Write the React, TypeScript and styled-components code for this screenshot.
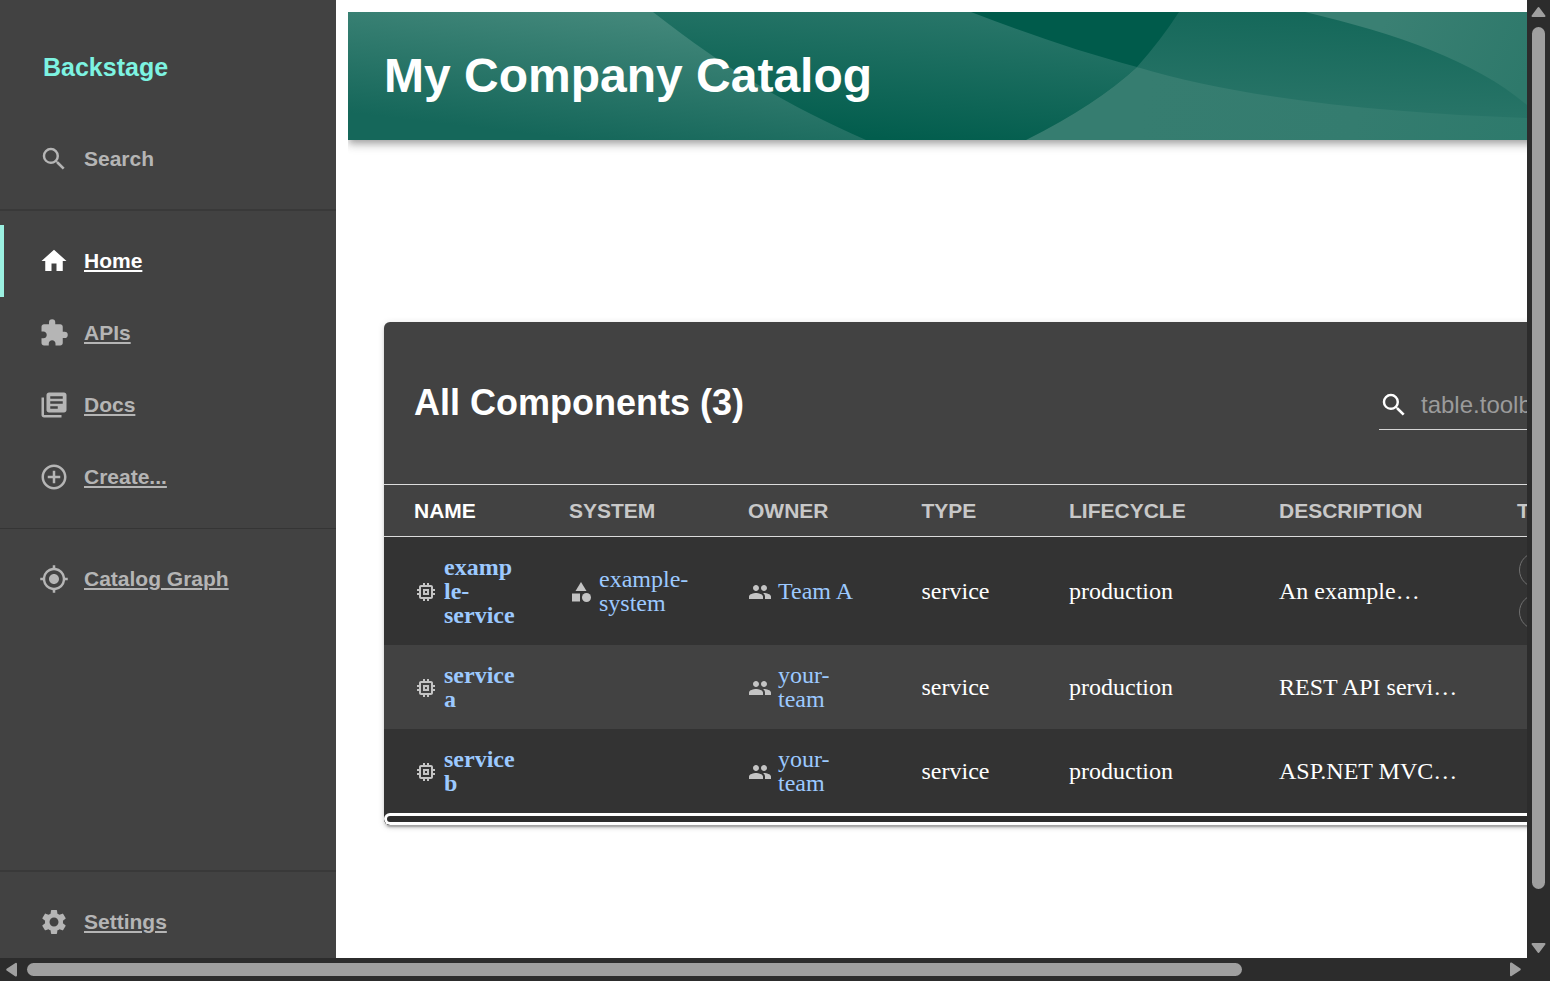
import React from "react";
import styled, { createGlobalStyle, css } from "styled-components";
import type { IconType } from "react-icons";
import {
  MdAddCircleOutline,
  MdCategory,
  MdExtension,
  MdHome,
  MdLibraryBooks,
  MdMemory,
  MdMyLocation,
  MdPeople,
  MdSearch,
  MdSettings,
} from "react-icons/md";

const sans = `"Liberation Sans", Arial, Helvetica, sans-serif`;
const serif = `"Liberation Serif", "Times New Roman", Times, serif`;

const GlobalStyle = createGlobalStyle`
  *, *::before, *::after { box-sizing: border-box; }
  body { margin: 0; background: #fff; font-family: ${sans}; overflow: hidden; }
`;

const Window = styled.div`
  display: grid;
  grid-template: 958px 23px / 1527px 23px;
  width: 1550px;
  height: 981px;
  background: #2c2c2c;
  overflow: hidden;
`;

const Viewport = styled.div`
  display: flex;
  min-width: 0;
  background: #fff;
  overflow: hidden;
`;

/* ---------- Sidebar ---------- */

const Sidebar = styled.nav`
  flex: none;
  display: flex;
  flex-direction: column;
  width: 336px;
  height: 958px;
  background: #424242;
`;

const Logo = styled.div`
  height: 123px;
  padding: 52px 0 0 43px;
  color: #7df3e1;
  font-size: 25px;
  font-weight: 700;
  line-height: 30px;
`;

const NavItem = styled.a<{ $active?: boolean; $plain?: boolean }>`
  display: flex;
  align-items: center;
  gap: 15px;
  height: 72px;
  padding-left: ${(p) => (p.$active ? 35 : 39)}px;
  border-left: ${(p) => (p.$active ? "4px solid #9bf0e1" : "none")};
  color: ${(p) => (p.$active ? "#fff" : "#b5b5b5")};
  font-size: 21px;
  font-weight: 700;
  line-height: 24px;
  text-decoration: ${(p) => (p.$plain ? "none" : "underline")};

  svg {
    flex: none;
    width: 30px;
    height: 30px;
  }
`;

const Divider = styled.hr<{ $thin?: boolean }>`
  width: 100%;
  height: ${(p) => (p.$thin ? 1 : 2)}px;
  margin: ${(p) => (p.$thin ? "15px 0 14px" : "14px 0")};
  border: 0;
  background: ${(p) => (p.$thin ? "#353535" : "#393939")};
`;

const Spacer = styled.div`
  flex: 1;
`;

/* ---------- Page ---------- */

const Page = styled.main`
  flex: 1;
  min-width: 0;
  padding: 12px 0 0 12px;
`;

const Header = styled.header`
  display: grid;
  align-items: center;
  width: 1240px;
  height: 128px;
  background: #005b4b;
  box-shadow:
    0 3px 6px -1.5px rgba(0, 0, 0, 0.2),
    0 6px 7.5px 0 rgba(0, 0, 0, 0.14),
    0 1.5px 15px 0 rgba(0, 0, 0, 0.12);
  clip-path: inset(0 0 -30px 0);

  > * {
    grid-area: 1 / 1;
  }
`;

const Waves = styled.svg`
  display: block;
  width: 1179px;
  height: 128px;
`;

const PageTitle = styled.h1`
  margin: 0;
  padding: 0 0 0 36px;
  color: #fff;
  font-size: 48px;
  font-weight: 700;
  line-height: 56px;
  z-index: 1;
`;

const Content = styled.section`
  padding: 182px 0 0 36px;
`;

const Card = styled.div`
  width: 1400px;
  border-radius: 6px;
  background: #424242;
  box-shadow:
    0 4.5px 1.5px -3px rgba(0, 0, 0, 0.2),
    0 3px 3px 0 rgba(0, 0, 0, 0.14),
    0 1.5px 7.5px 0 rgba(0, 0, 0, 0.12);
  overflow: hidden;
`;

const Toolbar = styled.div`
  display: flex;
  align-items: flex-start;
  height: 162px;
  padding-left: 30px;
`;

const TableTitle = styled.h2`
  width: 965px;
  margin: 0;
  padding-top: 60px;
  color: #fff;
  font-size: 36px;
  font-weight: 700;
  line-height: 42px;
`;

const SearchField = styled.div`
  display: flex;
  align-items: center;
  gap: 12px;
  flex: 1;
  height: 50px;
  margin-top: 58px;
  border-bottom: 1px solid #d4d4d4;
  color: #9b9b9b;
  font-size: 24px;
  line-height: 28px;
  white-space: nowrap;

  svg {
    flex: none;
    width: 30px;
    height: 30px;
    margin: 1px 0 0;
    color: #fff;
  }
`;

const columns = css`
  display: grid;
  grid-template-columns: 155px 179px 173.5px 147.5px 210px 238px 1fr;
`;

const HeadRow = styled.div`
  ${columns}
  align-items: center;
  height: 53px;
  border-top: 1px solid #dcdcdc;
  border-bottom: 1px solid #dcdcdc;
`;

const HeadCell = styled.div<{ $sorted?: boolean }>`
  padding-left: 30px;
  color: ${(p) => (p.$sorted ? "#fff" : "#c8c8c8")};
  font-size: 21px;
  font-weight: 700;
  line-height: 24px;
`;

const Row = styled.div<{ $dark?: boolean }>`
  ${columns}
  align-items: center;
  min-height: 84px;
  padding: 15px 0;
  background: ${(p) => (p.$dark ? "#333" : "#424242")};
`;

const Cell = styled.div`
  padding: 3px 0 3px 30px;
  color: #fff;
  font-family: ${serif};
  font-size: 24px;
  line-height: 24px;
  white-space: nowrap;
`;

const EntityLink = styled.a<{ $bold?: boolean; $width: number }>`
  display: flex;
  align-items: center;
  gap: 6px;
  color: #9cc9ff;
  font-weight: ${(p) => (p.$bold ? 700 : 400)};
  white-space: normal;

  svg {
    flex: none;
    width: 24px;
    height: 24px;
    margin: 2px 0 0;
    color: #c4c4c4;
  }

  span {
    width: ${(p) => p.$width}px;
    overflow-wrap: anywhere;
  }
`;

const Chips = styled.div`
  display: flex;
  flex-direction: column;
  gap: 6px;
  padding-left: 32px;
`;

const Chip = styled.span`
  width: 90px;
  height: 36px;
  border: 1px solid #707070;
  border-radius: 18px;
`;

const TableFooter = styled.div`
  background: #333;
`;

const TableScroll = styled.div`
  height: 12px;
  padding: 3px;
  border-radius: 6px;
  background: #fff;
`;

const TableScrollThumb = styled.div`
  height: 6px;
  border-radius: 3px;
  background: #2c2c2c;
`;

/* ---------- Window scrollbars ---------- */

const VerticalBar = styled.div`
  display: flex;
  flex-direction: column;
  align-items: center;
  justify-content: space-between;
  padding: 6px 0 4px;
`;

const HorizontalBar = styled.div`
  display: flex;
  align-items: center;
  justify-content: space-between;
  padding: 0 5px 0 5px;
`;

const VerticalThumb = styled.div`
  width: 13px;
  height: 862px;
  margin: 9px 0 auto;
  border-radius: 6.5px;
  background: #9f9f9f;
`;

const HorizontalThumb = styled.div`
  width: 1215px;
  height: 13px;
  margin: 0 auto 0 9px;
  border-radius: 6.5px;
  background: #9f9f9f;
`;

const ArrowSvg = styled.svg<{ $flip?: boolean }>`
  flex: none;
  display: block;
  transform: ${(p) => (p.$flip ? "rotate(180deg)" : "none")};
  fill: #a0a0a0;
  stroke: #a0a0a0;
  stroke-width: 2;
  stroke-linejoin: round;
`;

const UpDownArrow = ({ flip }: { flip?: boolean }) => (
  <ArrowSvg $flip={flip} width="17" height="12" viewBox="0 0 17 12">
    <path d="M8.5 2 L14.5 10 H2.5 Z" />
  </ArrowSvg>
);

const SideArrow = ({ flip }: { flip?: boolean }) => (
  <ArrowSvg $flip={flip} width="13" height="17" viewBox="0 0 13 17">
    <path d="M2.2 8.7 L11 2.8 V14.6 Z" />
  </ArrowSvg>
);

const HeaderWaves = () => (
  <Waves viewBox="0 0 1179 128" preserveAspectRatio="none" aria-hidden>
    <defs>
      <linearGradient id="left" gradientUnits="userSpaceOnUse" x1="250" y1="0" x2="235" y2="128">
        <stop offset="0" stopColor="#42877a" />
        <stop offset="1" stopColor="#15675a" />
      </linearGradient>
      <linearGradient id="middle" gradientUnits="userSpaceOnUse" x1="560" y1="0" x2="548" y2="128">
        <stop offset="0" stopColor="#277568" />
        <stop offset="1" stopColor="#025d4d" />
      </linearGradient>
      <linearGradient id="lens" gradientUnits="userSpaceOnUse" x1="900" y1="0" x2="895" y2="100">
        <stop offset="0" stopColor="#15685a" />
        <stop offset="1" stopColor="#297568" />
      </linearGradient>
      <linearGradient id="lower" gradientUnits="userSpaceOnUse" x1="800" y1="60" x2="1179" y2="128">
        <stop offset="0" stopColor="#367d70" />
        <stop offset="0.55" stopColor="#347c6f" />
        <stop offset="1" stopColor="#2e7a6c" />
      </linearGradient>
      <linearGradient id="corner" gradientUnits="userSpaceOnUse" x1="1040" y1="0" x2="1179" y2="60">
        <stop offset="0" stopColor="#3a8073" />
        <stop offset="1" stopColor="#2e796b" />
      </linearGradient>
    </defs>
    <path fill="url(#middle)" d="M0 0 H623 C680 22 732 40 789 55 Q748 93 678 128 H0 Z" />
    <path fill="url(#left)" d="M0 0 H305 C370 51 430 89 518 128 H0 Z" />
    <path fill="url(#lens)" d="M831 0 H1179 V128 H950 L789 55 Q813 28 831 0 Z" />
    <path fill="url(#lower)" d="M789 55 C895 87 1035 101 1179 106 V128 H678 Q748 93 789 55 Z" />
    <path fill="url(#corner)" d="M957 0 H1179 V93 C1127 49 1050 22 957 0 Z" />
  </Waves>
);

/* ---------- Data ---------- */

type Entity = {
  name: string;
  system?: string;
  owner: string;
  type: string;
  lifecycle: string;
  description: string;
  tags: number;
};

const entities: Entity[] = [
  {
    name: "example-service",
    system: "example-system",
    owner: "Team A",
    type: "service",
    lifecycle: "production",
    description: "An example…",
    tags: 2,
  },
  {
    name: "service a",
    owner: "your-team",
    type: "service",
    lifecycle: "production",
    description: "REST API servi…",
    tags: 0,
  },
  {
    name: "service b",
    owner: "your-team",
    type: "service",
    lifecycle: "production",
    description: "ASP.NET MVC…",
    tags: 0,
  },
];

const headings = ["NAME", "SYSTEM", "OWNER", "TYPE", "LIFECYCLE", "DESCRIPTION", "TAGS"];

const mainLinks: { label: string; icon: IconType; active?: boolean }[] = [
  { label: "Home", icon: MdHome, active: true },
  { label: "APIs", icon: MdExtension },
  { label: "Docs", icon: MdLibraryBooks },
  { label: "Create...", icon: MdAddCircleOutline },
];

export default function App() {
  return (
    <>
      <GlobalStyle />
      <Window>
        <Viewport>
          <Sidebar>
            <Logo>Backstage</Logo>
            <NavItem $plain>
              <MdSearch />
              Search
            </NavItem>
            <Divider />
            {mainLinks.map(({ label, icon: Icon, active }) => (
              <NavItem key={label} $active={active}>
                <Icon />
                {label}
              </NavItem>
            ))}
            <Divider $thin />
            <NavItem>
              <MdMyLocation />
              Catalog Graph
            </NavItem>
            <Spacer />
            <Divider />
            <NavItem>
              <MdSettings />
              Settings
            </NavItem>
          </Sidebar>

          <Page>
            <Header>
              <HeaderWaves />
              <PageTitle>My Company Catalog</PageTitle>
            </Header>
            <Content>
              <Card>
                <Toolbar>
                  <TableTitle>All Components (3)</TableTitle>
                  <SearchField>
                    <MdSearch />
                    table.toolbar.search
                  </SearchField>
                </Toolbar>
                <HeadRow>
                  {headings.map((h, i) => (
                    <HeadCell key={h} $sorted={i === 0}>
                      {h}
                    </HeadCell>
                  ))}
                </HeadRow>
                {entities.map((e, i) => (
                  <Row key={e.name} $dark={i % 2 === 0}>
                    <Cell>
                      <EntityLink $bold $width={72}>
                        <MdMemory />
                        <span>{e.name}</span>
                      </EntityLink>
                    </Cell>
                    <Cell>
                      {e.system && (
                        <EntityLink $width={95}>
                          <MdCategory />
                          <span>{e.system}</span>
                        </EntityLink>
                      )}
                    </Cell>
                    <Cell>
                      <EntityLink $width={82}>
                        <MdPeople />
                        <span>{e.owner}</span>
                      </EntityLink>
                    </Cell>
                    <Cell>{e.type}</Cell>
                    <Cell>{e.lifecycle}</Cell>
                    <Cell>{e.description}</Cell>
                    <Chips>
                      {Array.from({ length: e.tags }, (_, n) => (
                        <Chip key={n} />
                      ))}
                    </Chips>
                  </Row>
                ))}
                <TableFooter>
                  <TableScroll>
                    <TableScrollThumb />
                  </TableScroll>
                </TableFooter>
              </Card>
            </Content>
          </Page>
        </Viewport>

        <VerticalBar>
          <UpDownArrow />
          <VerticalThumb />
          <UpDownArrow flip />
        </VerticalBar>
        <HorizontalBar>
          <SideArrow />
          <HorizontalThumb />
          <SideArrow flip />
        </HorizontalBar>
      </Window>
    </>
  );
}
